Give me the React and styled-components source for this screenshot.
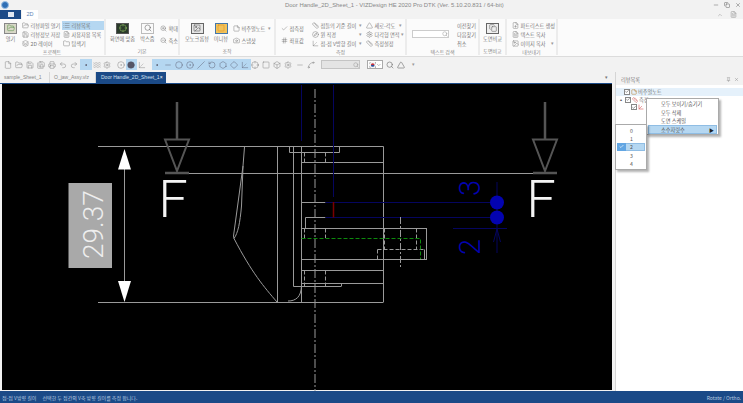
import React from "react";
import styled, { createGlobalStyle } from "styled-components";
import {
  File, FolderOpen, Save, SaveAll, Printer, Undo2, Redo2, Dot, Waves, Settings, CircleDot, Circle,
  Minus, Slash, RotateCcw, Hexagon, Axis3d, Spline, Search, ZoomIn, ZoomOut, FileText,
  Image, Layers, List, Folder, Compass, Camera, StickyNote, Check, X, Pin, ChevronUp, ChevronDown,
  Square, Copy, FilePlus, Ruler, Triangle, Hash, Diamond, Crosshair, Box,
} from "lucide-react";

const GlobalStyle = createGlobalStyle`
  html, body {
    margin: 0;
    padding: 0;
    background: #f2f2f2;
  }
  body {
    font-family: "Noto Sans CJK KR", "Noto Sans", sans-serif;
  }
`;

const Window = styled.div`
  width: 743px;
  height: 403px;
  display: flex;
  flex-direction: column;
  overflow: hidden;
  position: relative;
  background: #f2f2f2;
  color: #777;
  font-size: 5.2px;
  line-height: 9px;
  white-space: nowrap;
`;

const TitleBar = styled.div`
  height: 10px;
  flex: none;
  display: flex;
  align-items: center;
  padding: 0 2px 0 1px;
`;

const AppLogo = styled.div`
  width: 8px;
  height: 8px;
  border-radius: 50%;
  background: #2f6fb5;
  border: 1px solid #9cc0e4;
  box-sizing: border-box;
`;

const TitleText = styled.div`
  color: #888;
  font-family: "Liberation Sans", sans-serif;
  font-size: 5.9px;
  margin-left: 276px;
`;

const WinButtons = styled.div`
  display: flex;
  gap: 5px;
  margin-left: auto;
  color: #666;
`;

const TabRow = styled.div`
  height: 9px;
  flex: none;
  display: flex;
  align-items: stretch;
  justify-content: space-between;
  padding-right: 6px;
`;

const TabGroup = styled.div`
  display: flex;
`;

const FileTab = styled.div`
  width: 21px;
  background: #1b4a87;
  display: flex;
  align-items: center;
  justify-content: center;
`;

const FileGlyph = styled.div`
  width: 6px;
  height: 5px;
  background: #dfe7f1;
`;

const RibbonTab = styled.div`
  width: 16px;
  margin-left: 1px;
  background: #fff;
  color: #5c84b5;
  text-align: center;
  font-family: "Liberation Sans", sans-serif;
  font-size: 5.5px;
`;

const RibbonTools = styled.div`
  display: flex;
  align-items: center;
  gap: 7px;
  color: #999;
`;

const Ribbon = styled.div`
  height: 38px;
  flex: none;
  background: #fbfbfb;
  border-bottom: 1px solid #dcdcdc;
  box-sizing: border-box;
  display: flex;
`;

const Group = styled.div`
  width: ${(p) => p.$w}px;
  flex: none;
  box-sizing: border-box;
  border-right: 2px solid #ececec;
  display: flex;
  flex-direction: column;
  margin-bottom: 1px;
`;

const GroupBody = styled.div`
  flex: 1;
  display: flex;
  align-items: flex-start;
  padding: 1.5px 0 0 ${(p) => p.$pad || 0}px;
  gap: ${(p) => p.$gap || 0}px;
`;

const GroupLabel = styled.div`
  height: 8px;
  line-height: 8px;
  text-align: center;
  color: #888;
  font-size: 5px;
`;

const BigButton = styled.div`
  width: ${(p) => p.$w || 24}px;
  flex: none;
  display: flex;
  flex-direction: column;
  align-items: center;
  padding-top: 2px;
`;

const BigIcon = styled.div`
  width: 13px;
  height: 11px;
  box-sizing: border-box;
  background: ${(p) => p.$bg || "#ddd"};
  border: 1px solid ${(p) => p.$line || "#777"};
  display: flex;
  align-items: center;
  justify-content: center;
`;

const Stack = styled.div`
  width: ${(p) => p.$w}px;
  flex: none;
  display: flex;
  flex-direction: column;
  padding-top: ${(p) => p.$top || 0}px;
  gap: ${(p) => p.$gap || 0}px;
`;

const SmallItem = styled.div`
  height: 9px;
  display: flex;
  align-items: center;
  gap: 1.5px;
  padding-left: 1px;
  background: ${(p) => (p.$on ? "#b5d7f1" : "transparent")};
  svg {
    flex: none;
    color: #666;
  }
`;

const Caret = styled.span`
  margin-left: auto;
  margin-right: 3px;
  color: #999;
  font-size: 4.5px;
`;

const SearchBox = styled.div`
  width: 38px;
  height: 8px;
  margin-top: 9px;
  background: #fff;
  border: 1px solid #ccc;
  box-sizing: border-box;
  display: flex;
  justify-content: flex-end;
  align-items: center;
  color: #999;
`;

const Toolbar = styled.div`
  height: 15px;
  flex: none;
  display: flex;
  align-items: center;
  padding-left: 2.5px;
`;

const ToolSlot = styled.div`
  width: ${(p) => p.$w || 11}px;
  height: 11px;
  flex: none;
  display: flex;
  align-items: center;
  justify-content: center;
  background: ${(p) => (p.$on ? "#b5d7f1" : "transparent")};
  color: ${(p) => (p.$on ? "#556" : "#777")};
`;

const ToolCombo = styled.div`
  width: 39px;
  height: 9px;
  margin: 0 7px 0 4px;
  flex: none;
  background: #e4e4e4;
  border: 1px solid #c4c4c4;
  box-sizing: border-box;
  display: flex;
  justify-content: flex-end;
  align-items: center;
  color: #999;
`;

const FlagCombo = styled.div`
  width: 16px;
  height: 9px;
  flex: none;
  margin-right: 2px;
  padding-left: 1px;
  background: #fff;
  border: 1px solid #aaa;
  box-sizing: border-box;
  display: flex;
  align-items: center;
  justify-content: space-between;
`;

const Main = styled.div`
  flex: 1;
  display: flex;
  min-height: 0;
`;

const DocArea = styled.div`
  width: 612px;
  flex: none;
  display: flex;
  flex-direction: column;
`;

const DocTabs = styled.div`
  height: 11px;
  flex: none;
  display: flex;
  align-items: stretch;
  border-bottom: 1px solid #1b4a87;
  position: relative;
  font-family: "Liberation Sans", sans-serif;
  font-size: 5px;
`;

const DocTab = styled.div`
  width: ${(p) => p.$w}px;
  flex: none;
  box-sizing: border-box;
  padding: 1px 0 0 ${(p) => (p.$on ? 5 : 4)}px;
  display: flex;
  justify-content: space-between;
  background: ${(p) => (p.$on ? "#1b4a87" : "#f2f2f2")};
  color: ${(p) => (p.$on ? "#d5e0ee" : "#888")};
  border-right: 1px solid ${(p) => (p.$on ? "#1b4a87" : "#d8d8d8")};
`;

const TabClose = styled.span`
  margin-right: 3px;
  color: #fff;
`;

const TabListButton = styled.span`
  position: absolute;
  right: 4px;
  top: 1px;
  color: #777;
  font-size: 5px;
`;

const Canvas = styled.div`
  flex: 1;
  min-height: 0;
  margin-left: 2px;
  background: #000;
  margin-bottom: 1px;
`;

const Panel = styled.aside`
  flex: 1;
  margin-left: 3px;
  background: #fff;
  border-left: 1px solid #d5d5d5;
  display: flex;
  flex-direction: column;
`;

const PanelHead = styled.div`
  height: 12px;
  flex: none;
  margin-bottom: 3px;
  background: #f2f2f2;
  display: flex;
  align-items: center;
  justify-content: space-between;
  padding: 1px 4px 0 5px;
  color: #777;
`;

const PanelTools = styled.div`
  display: flex;
  gap: 3px;
  color: #888;
`;

const TreeRow = styled.div`
  height: 7.7px;
  display: flex;
  align-items: center;
  gap: 1px;
  padding-left: ${(p) => p.$indent}px;
  background: ${(p) => (p.$on ? "#e5f1fb" : "transparent")};
`;

const TreeToggle = styled.span`
  width: 4px;
  flex: none;
  color: #555;
  font-size: 4px;
`;

const CheckBox = styled.span`
  width: 6px;
  height: 6px;
  flex: none;
  box-sizing: border-box;
  border: 1px solid #888;
  display: flex;
  align-items: center;
  justify-content: center;
  background: #fff;
  color: #333;
`;

const Menu = styled.div`
  position: absolute;
  left: ${(p) => p.$x}px;
  top: ${(p) => p.$y}px;
  width: ${(p) => p.$w}px;
  background: #fff;
  border: 1px solid #aaa;
  box-shadow: 2px 2px 2px rgba(0, 0, 0, 0.3);
  padding: ${(p) => p.$pad || 0}px 1px;
  box-sizing: border-box;
  color: #555;
`;

const MenuItem = styled.div`
  height: ${(p) => p.$h}px;
  display: flex;
  align-items: center;
  position: relative;
  padding-left: ${(p) => p.$indent}px;
  background: ${(p) => (p.$on ? "#b5d7f1" : "transparent")};
  outline: ${(p) => (p.$on ? "1px solid #8fbde4" : "none")};
  outline-offset: -1px;
`;

const MenuArrow = styled.span`
  position: absolute;
  right: 3px;
  font-size: 5px;
  color: #222;
`;

const MenuCheck = styled.span`
  position: absolute;
  left: 0;
  top: 0;
  bottom: 0;
  width: 9px;
  background: #62a6e3;
  color: #fff;
  display: flex;
  align-items: center;
  justify-content: center;
`;

const StatusBar = styled.div`
  height: 12px;
  flex: none;
  background: #1b4a87;
  color: #b9cbe0;
  display: flex;
  align-items: center;
  justify-content: space-between;
  padding: 0 2px;
  font-size: 5px;
`;

const StatusHint = styled.span`
  margin-left: 6px;
`;

const Small = ({ icon: Icon, on, caret, children }) => (
  <SmallItem $on={on}>
    <Icon size={7} strokeWidth={1.4} />
    {children}
    {caret && <Caret>▾</Caret>}
  </SmallItem>
);

const Big = ({ w, bg, line, icon: Icon, color, children }) => (
  <BigButton $w={w}>
    <BigIcon $bg={bg} $line={line}>
      <Icon size={8} strokeWidth={1.5} color={color} />
    </BigIcon>
    {children}
  </BigButton>
);

const FlagIcon = () => (
  <svg width="8" height="6" viewBox="0 0 8 6">
    <rect width="8" height="6" fill="#f4f4f4" />
    <path d="M2 3a2 2 0 0 1 4 0Z" fill="#c8323c" />
    <path d="M2 3a2 2 0 0 0 4 0Z" fill="#2a4f9c" />
    <path d="M0.5 1L1.5 0.5M6.5 0.5L7.5 1M0.5 5L1.5 5.5M6.5 5.5L7.5 5" stroke="#333" strokeWidth="0.7" />
  </svg>
);

// icon, highlighted, slot width, stroke, filled
const tools = [
  [File], [FolderOpen], [Save], [SaveAll], [Printer], [Undo2], [Redo2],
  [Dot, true, 12, 3], [Waves, false, 10], [Settings, false, 10], [null, false, 4],
  [CircleDot, false, 10], [Circle, true, 11, 0, true], [Axis3d, false, 10], [null, false, 5],
  [Dot, true, 11, 3], [Minus, true], [Circle, true], [CircleDot, true], [Slash, true], [RotateCcw, true],
  [Hexagon, true], [Diamond, true], [Axis3d, true],
  [Crosshair, false, 8], [Square, false, 14], [Box, false, 8], [Settings, false, 14],
  [Minus, false, 10], [Spline, false, 12],
];

const LINE = "#9a9a9a";

// canvas coordinates are page pixels, see viewBox
const solid = [
  [98, 145.5, 245, 145.5], [189, 172.5, 533, 172.5], [98, 301.5, 383, 301.5],
  [244.5, 145.5, 383.5, 145.5], [383.5, 145.5, 383.5, 301.5], [277.5, 145.5, 277.5, 301.5],
  [293.5, 145.5, 293.5, 285.5], [301.5, 145.5, 301.5, 301.5], [289.5, 145.5, 289.5, 151.5],
  [339.5, 145.5, 339.5, 151.5], [289.5, 151.5, 339.5, 151.5], [301.5, 161.5, 383, 161.5],
  [301.5, 201.5, 325.5, 201.5], [305.5, 216.5, 325.5, 216.5], [305.5, 216.5, 305.5, 227.5],
  [301.5, 227.5, 427, 227.5], [301.5, 258.5, 427, 258.5], [301.5, 269.5, 383, 269.5],
  [301.5, 282.5, 383, 282.5], [293.5, 285.5, 341, 285.5], [341.5, 282.5, 341.5, 285.5],
  [426.5, 227.5, 426.5, 258.5], [424.5, 248.5, 424.5, 258.5],
];

const dashed = [
  [304.5, 151.5, 325.5, 151.5], [304.5, 151.5, 304.5, 162], [325.5, 151.5, 325.5, 162],
  [304.5, 227.5, 304.5, 237], [325.5, 227.5, 325.5, 237], [304.5, 269.5, 304.5, 285],
  [325.5, 269.5, 325.5, 285], [384.5, 227.5, 384.5, 248], [416.5, 227.5, 416.5, 248],
  [377.5, 248.5, 424.5, 248.5], [377.5, 248.5, 377.5, 258],
];

const navy = [
  [325.5, 201.5, 497, 201.5], [325.5, 216.5, 497, 216.5], [333.5, 84, 333.5, 196],
  [301.5, 84, 301.5, 140], [453, 227.5, 507, 227.5], [497, 181, 497, 252],
];

const SectionMark = ({ x, fx }) => (
  <g>
    <path d={`M${x} 101V138`} stroke="#555" strokeWidth="2.5" fill="none" />
    <path d={`M${x - 12} 138.5H${x + 12}L${x} 170Z`} stroke="#555" strokeWidth="2" fill="none" />
    <path d={`M${x - 12} 172H${x + 12}`} stroke="#555" strokeWidth="2.5" fill="none" />
    <text x={fx} y="216" fontFamily="Roboto" fontWeight="300" fontSize="52" fill="#f5f5f5">F</text>
  </g>
);

const Drawing = () => (
  <svg width="610" height="307" viewBox="2 83 610 307" style={{ display: "block" }}>
    {solid.map((l, i) => (
      <line key={i} x1={l[0]} y1={l[1]} x2={l[2]} y2={l[3]} stroke={LINE} strokeWidth="1" />
    ))}
    {dashed.map((l, i) => (
      <line key={i} x1={l[0]} y1={l[1]} x2={l[2]} y2={l[3]} stroke={LINE} strokeWidth="1" strokeDasharray="4 2" />
    ))}
    {navy.map((l, i) => (
      <line key={i} x1={l[0]} y1={l[1]} x2={l[2]} y2={l[3]} stroke="#05055f" strokeWidth="1" />
    ))}
    <line x1="315" y1="88" x2="315" y2="390" stroke={LINE} strokeDasharray="9 2 2 2" />
    <line x1="400.5" y1="216" x2="400.5" y2="268" stroke={LINE} strokeDasharray="7 2 2 2" />
    <line x1="333.5" y1="201" x2="333.5" y2="216.5" stroke="#7a0000" strokeWidth="1.5" />
    <path d="M301.5 237.5H420.5V258" stroke="#0d8a0d" fill="none" strokeDasharray="4 2" />
    <path d="M244.5 146L243 165L233.5 235L234 237.5C252 272 264 286 277 301" stroke={LINE} fill="none" />
    <path d="M243 165L241.5 205C240 222 238 232 234 237.5" stroke={LINE} fill="none" />
    <path d="M288 300C296 300 301 296 301.5 285" stroke={LINE} fill="none" />

    <line x1="124.5" y1="150" x2="124.5" y2="299" stroke={LINE} />
    <path d="M124.5 148L118 168.5H131Z" fill="#fff" />
    <path d="M124.5 301L118 280H131Z" fill="#fff" />
    <rect x="68.5" y="182" width="43.5" height="85" fill="#a9a9a9" />
    <text
      transform="translate(103 258) rotate(-90)"
      fontFamily="Roboto"
      fontWeight="300"
      fontSize="28"
      fill="#eeeeee"
    >
      29.37
    </text>

    <SectionMark x={177} fx={158.5} />
    <SectionMark x={545} fx={526.5} />

    <circle cx="497" cy="201.5" r="7" fill="#0303b0" />
    <circle cx="497" cy="216.5" r="7" fill="#0303b0" />
    <path d="M493.5 241L497 228L500.5 241" stroke="#05055f" fill="none" />
    <text transform="translate(480 195) rotate(-90)" fontFamily="Roboto" fontWeight="300" fontSize="29" fill="#0303b0">3</text>
    <text transform="translate(480 254) rotate(-90)" fontFamily="Roboto" fontWeight="300" fontSize="29" fill="#0303b0">2</text>
  </svg>
);

export default function App() {
  return (
    <>
      <GlobalStyle />
      <Window>
        <TitleBar>
          <AppLogo />
          <TitleText>Door Handle_2D_Sheet_1 - VIZDesign HE 2020 Pro DTK (Ver. 5.10.20.831 / 64-bit)</TitleText>
          <WinButtons>
            <Minus size={6} />
            <Copy size={6} />
            <X size={6} />
          </WinButtons>
        </TitleBar>

        <TabRow>
          <TabGroup>
            <FileTab><FileGlyph /></FileTab>
            <RibbonTab>2D</RibbonTab>
          </TabGroup>
          <RibbonTools>
            <ChevronUp size={6} />
            <FileText size={7} />
          </RibbonTools>
        </TabRow>

        <Ribbon>
          <Group $w={106}>
            <GroupBody>
              <Big w={21} bg="#d8d8c8" line="#888" icon={FolderOpen} color="#4a8a3a">열기</Big>
              <Stack $w={41}>
                <Small icon={FolderOpen}>리뷰파일 열기</Small>
                <Small icon={Save}>리뷰정보 저장</Small>
                <Small icon={Layers}>2D 레이어</Small>
              </Stack>
              <Stack $w={42}>
                <Small icon={List} on>리뷰목록</Small>
                <Small icon={FileText}>사용자용 목록</Small>
                <Small icon={Folder}>탐색기</Small>
              </Stack>
            </GroupBody>
            <GroupLabel>프로젝트</GroupLabel>
          </Group>

          <Group $w={74}>
            <GroupBody $pad={3}>
              <Big w={27} bg="#2a3a2a" line="#555" icon={Crosshair} color="#9ccf6a">화면에 맞춤</Big>
              <Big w={23} bg="#fafafa" line="#bbb" icon={Search} color="#555">박스줌</Big>
              <Stack $w={20} $top={3} $gap={3}>
                <Small icon={ZoomIn}>확대</Small>
                <Small icon={ZoomOut}>축소</Small>
              </Stack>
            </GroupBody>
            <GroupLabel>기본</GroupLabel>
          </Group>

          <Group $w={96}>
            <GroupBody $pad={4}>
              <Big w={26} bg="#e6e6e6" line="#666" icon={Image} color="#444">모노크롬뷰</Big>
              <Big w={22} bg="#f3c35a" line="#4477aa" icon={Square} color="#d98a20">미니뷰</Big>
              <Stack $w={42} $top={3} $gap={3}>
                <Small icon={StickyNote} caret>비주얼노트</Small>
                <Small icon={Camera}>스냅샷</Small>
              </Stack>
            </GroupBody>
            <GroupLabel>조작</GroupLabel>
          </Group>

          <Group $w={131}>
            <GroupBody $pad={4}>
              <Stack $w={31} $top={3} $gap={3}>
                <Small icon={Check}>점측정</Small>
                <Small icon={Hash}>좌표값</Small>
              </Stack>
              <Stack $w={54}>
                <Small icon={Ruler} caret>점들의 기준 길이</Small>
                <Small icon={Compass} caret>원 직경</Small>
                <Small icon={Axis3d} caret>점-점 V방향 길이</Small>
              </Stack>
              <Stack $w={40}>
                <Small icon={Triangle} caret>세로-각도</Small>
                <Small icon={Settings} caret>다각형 면적</Small>
                <Small icon={Ruler}>측정설정</Small>
              </Stack>
            </GroupBody>
            <GroupLabel>측정</GroupLabel>
          </Group>

          <Group $w={73}>
            <GroupBody $pad={5} $gap={7}>
              <SearchBox><Search size={6} /></SearchBox>
              <Stack $w={22}>
                <SmallItem>이전찾기</SmallItem>
                <SmallItem>다음찾기</SmallItem>
                <SmallItem>취소</SmallItem>
              </Stack>
            </GroupBody>
            <GroupLabel>텍스트 검색</GroupLabel>
          </Group>

          <Group $w={27}>
            <GroupBody>
              <Big w={25} bg="#eee" line="#666" icon={Copy} color="#555">도면비교</Big>
            </GroupBody>
            <GroupLabel>도면비교</GroupLabel>
          </Group>

          <Group $w={51}>
            <GroupBody $pad={4}>
              <Stack $w={46}>
                <Small icon={FilePlus}>파트리스트 생성</Small>
                <Small icon={FileText}>텍스트 복사</Small>
                <Small icon={Image} caret>이미지 복사</Small>
              </Stack>
            </GroupBody>
            <GroupLabel>내보내기</GroupLabel>
          </Group>
        </Ribbon>

        <Toolbar>
          {tools.map(([Icon, on, w, stroke, fill], i) => (
            <ToolSlot key={i} $on={on} $w={w}>
              {Icon && <Icon size={8} strokeWidth={stroke || 1.3} fill={fill ? "currentColor" : "none"} />}
            </ToolSlot>
          ))}
          <ToolCombo><Search size={6} /></ToolCombo>
          <FlagCombo>
            <FlagIcon />
            <ChevronDown size={6} />
          </FlagCombo>
          <ToolSlot><Search size={8} /></ToolSlot>
          <ToolSlot><Triangle size={8} /></ToolSlot>
          <ToolSlot><Caret>▾</Caret></ToolSlot>
        </Toolbar>

        <Main>
          <DocArea>
            <DocTabs>
              <DocTab $w={50}>sample_Sheet_1</DocTab>
              <DocTab $w={46}>O_jaw_Assy.vlz</DocTab>
              <DocTab $w={70} $on>
                Door Handle_2D_Sheet_1
                <TabClose>×</TabClose>
              </DocTab>
              <TabListButton>▾</TabListButton>
            </DocTabs>
            <Canvas><Drawing /></Canvas>
          </DocArea>

          <Panel>
            <PanelHead>
              리뷰목록
              <PanelTools>
                <Pin size={5} />
                <X size={5} />
              </PanelTools>
            </PanelHead>
            <TreeRow $indent={8} $on>
              <CheckBox><Check size={5} strokeWidth={3} /></CheckBox>
              <StickyNote size={6} color="#b47a2a" />
              비주얼노트
            </TreeRow>
            <TreeRow $indent={4}>
              <TreeToggle>▴</TreeToggle>
              <CheckBox><Check size={5} strokeWidth={3} /></CheckBox>
              <Ruler size={6} color="#c55" />
              측정
            </TreeRow>
            <TreeRow $indent={15}>
              <CheckBox><Check size={5} strokeWidth={3} /></CheckBox>
              <Axis3d size={6} color="#c33" />
            </TreeRow>
          </Panel>
        </Main>

        <StatusBar>
          <span>
            점-점 V방향 길이
            <StatusHint>선택한 두 점간의 V축 방향 길이를 측정 합니다.</StatusHint>
          </span>
          <span>Rotate / Ortho.</span>
        </StatusBar>

        <Menu $x={646} $y={98} $w={73}>
          <MenuItem $h={8.7} $indent={13}>모두 보이기/숨기기</MenuItem>
          <MenuItem $h={8.7} $indent={13}>모두 삭제</MenuItem>
          <MenuItem $h={8.7} $indent={13}>도면 스케일</MenuItem>
          <MenuItem $h={8.7} $indent={13} $on>
            소수자릿수
            <MenuArrow>▶</MenuArrow>
          </MenuItem>
        </Menu>

        <Menu $x={615} $y={124} $w={32} $pad={1}>
          {[0, 1, 2, 3, 4].map((n) => (
            <MenuItem key={n} $h={8.4} $indent={13} $on={n === 2}>
              {n === 2 && <MenuCheck><Check size={5} strokeWidth={3} /></MenuCheck>}
              {n}
            </MenuItem>
          ))}
        </Menu>
      </Window>
    </>
  );
}
